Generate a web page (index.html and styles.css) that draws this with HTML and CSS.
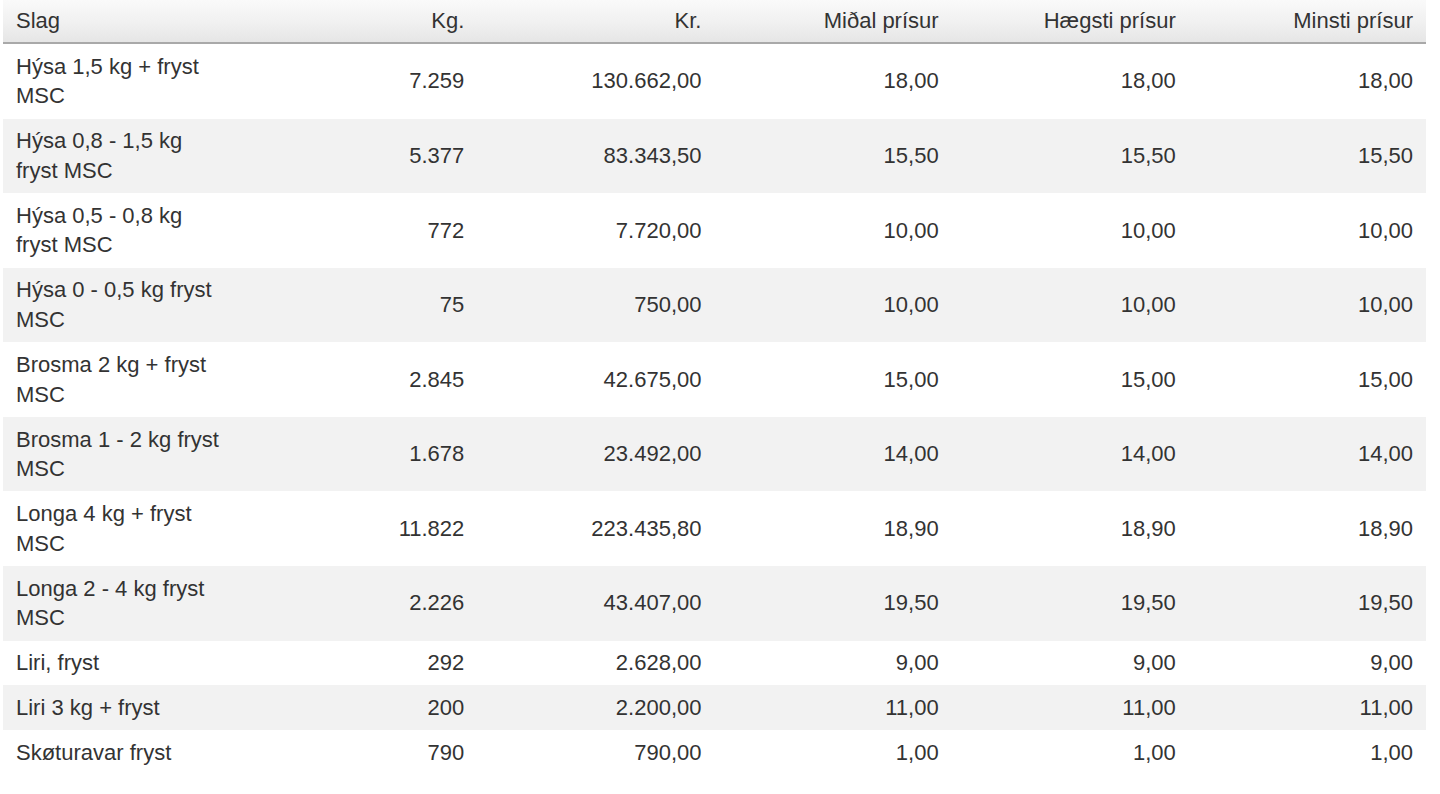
FILE: index.html
```html
<!DOCTYPE html>
<html lang="is">
<head>
<meta charset="utf-8">
<title>Slag</title>
<link rel="stylesheet" href="styles.css">
</head>
<body>
<div class="wrap">
<table class="prices">
  <thead>
    <tr>
      <th class="name">Slag</th>
      <th>Kg.</th>
      <th>Kr.</th>
      <th>Miðal prísur</th>
      <th>Hægsti prísur</th>
      <th>Minsti prísur</th>
    </tr>
  </thead>
  <tbody>
    <tr><td class="name">Hýsa 1,5 kg + fryst MSC</td><td>7.259</td><td>130.662,00</td><td>18,00</td><td>18,00</td><td>18,00</td></tr>
    <tr><td class="name">Hýsa 0,8 - 1,5 kg fryst MSC</td><td>5.377</td><td>83.343,50</td><td>15,50</td><td>15,50</td><td>15,50</td></tr>
    <tr><td class="name">Hýsa 0,5 - 0,8 kg fryst MSC</td><td>772</td><td>7.720,00</td><td>10,00</td><td>10,00</td><td>10,00</td></tr>
    <tr><td class="name">Hýsa 0 - 0,5 kg fryst MSC</td><td>75</td><td>750,00</td><td>10,00</td><td>10,00</td><td>10,00</td></tr>
    <tr><td class="name">Brosma 2 kg + fryst MSC</td><td>2.845</td><td>42.675,00</td><td>15,00</td><td>15,00</td><td>15,00</td></tr>
    <tr><td class="name">Brosma 1 - 2 kg fryst MSC</td><td>1.678</td><td>23.492,00</td><td>14,00</td><td>14,00</td><td>14,00</td></tr>
    <tr><td class="name">Longa 4 kg + fryst MSC</td><td>11.822</td><td>223.435,80</td><td>18,90</td><td>18,90</td><td>18,90</td></tr>
    <tr><td class="name">Longa 2 - 4 kg fryst MSC</td><td>2.226</td><td>43.407,00</td><td>19,50</td><td>19,50</td><td>19,50</td></tr>
    <tr><td class="name">Liri, fryst</td><td>292</td><td>2.628,00</td><td>9,00</td><td>9,00</td><td>9,00</td></tr>
    <tr><td class="name">Liri 3 kg + fryst</td><td>200</td><td>2.200,00</td><td>11,00</td><td>11,00</td><td>11,00</td></tr>
    <tr><td class="name">Skøturavar fryst</td><td>790</td><td>790,00</td><td>1,00</td><td>1,00</td><td>1,00</td></tr>
  </tbody>
</table>
</div>
</body>
</html>
```

FILE: styles.css
```css
html, body {
  margin: 0;
  padding: 0;
  background: #ffffff;
}

.wrap {
  padding: 0 14px 0 3px;
}

.prices {
  width: 100%;
  table-layout: fixed;
  border-collapse: collapse;
  font-family: "Liberation Sans", Arial, Helvetica, sans-serif;
  font-size: 22px;
  color: #333333;
}

.prices th,
.prices td {
  padding: 7.7px 13px;
  line-height: 29.6px;
  text-align: right;
  vertical-align: middle;
  font-weight: normal;
}

.prices th.name,
.prices td.name {
  text-align: left;
}

.prices thead th {
  height: 42px;
  padding-top: 0;
  padding-bottom: 0;
  background: linear-gradient(to bottom, #fafafa 0%, #f1f1f1 50%, #e6e6e6 100%);
  border-bottom: 2px solid #a9a9a9;
}

.prices tbody tr:nth-child(even) td {
  background: #f2f2f2;
}
```
